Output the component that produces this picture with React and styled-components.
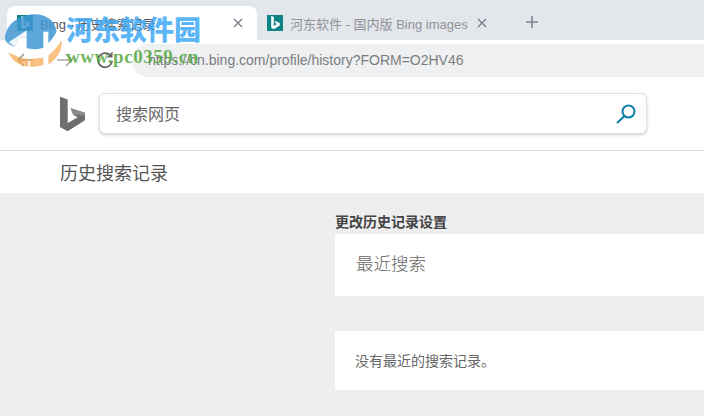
import React from "react";
import styled, { createGlobalStyle } from "styled-components";

const Global = createGlobalStyle`
  html, body { margin: 0; padding: 0; }
  body {
    width: 704px;
    height: 416px;
    overflow: hidden;
    background: #eeeeee;
    font-family: "Liberation Sans", "Noto Sans CJK SC", sans-serif;
  }
`;

const Page = styled.div`
  position: relative;
  width: 704px;
  height: 416px;
  overflow: hidden;
  display: flex;
  flex-direction: column;
`;

const TabStrip = styled.div`
  height: 40px;
  flex: none;
  display: flex;
  align-items: flex-end;
  background: #e3e6ea;
  padding-left: 7px;
`;

const ActiveTab = styled.div`
  width: 250px;
  height: 34px;
  box-sizing: border-box;
  display: flex;
  align-items: center;
  padding: 0 14px 0 10px;
  background: #fff;
  border-radius: 8px 8px 0 0;
`;

const IdleTab = styled.div`
  width: 235px;
  height: 40px;
  box-sizing: border-box;
  display: flex;
  align-items: center;
  padding: 6px 5px 0 10px;
  background: #e3e6ea;
  border-radius: 0 0 0 8px;
`;

const Favicon = styled.div`
  width: 16px;
  height: 16px;
  flex: none;
  background: #0f8487;
  display: flex;
  align-items: center;
  justify-content: center;
`;

const TabTitle = styled.span`
  flex: 1;
  margin-left: 7px;
  font-size: 13px;
  white-space: nowrap;
  color: ${(p) => (p.$dim ? "#909398" : "#55585c")};
`;

const Close = styled.svg`
  width: 10px;
  height: 10px;
  flex: none;
`;

const Plus = styled.svg`
  width: 14px;
  height: 14px;
  margin: 0 0 11px 33px;
  flex: none;
`;

const Toolbar = styled.div`
  height: 40px;
  flex: none;
  display: flex;
  align-items: center;
  background: #fff;
  padding-left: 15px;
`;

const NavIcon = styled.svg`
  width: 20px;
  height: 20px;
  flex: none;
  margin-right: ${(p) => p.$gap}px;
`;

const Address = styled.div`
  flex: 1;
  height: 33px;
  margin-left: 17px;
  display: flex;
  align-items: center;
  padding-left: 16px;
  background: #eef0f2;
  border-radius: 17px 0 0 17px;
  color: #7b7d80;
  font-size: 14px;
`;

const SearchHeader = styled.div`
  height: 71px;
  flex: none;
  box-sizing: border-box;
  display: flex;
  align-items: flex-start;
  padding: 13px 0 0 60px;
  background: #fff;
  border-bottom: 1px solid #dddddd;
`;

const BingMark = styled.svg`
  width: 25px;
  height: 36px;
  flex: none;
  margin-top: 3px;
`;

const SearchBox = styled.div`
  width: 548px;
  height: 41px;
  box-sizing: border-box;
  margin-left: 14px;
  display: flex;
  align-items: center;
  justify-content: space-between;
  padding: 0 9px 0 16px;
  background: #fff;
  border: 1px solid #e2e2e2;
  border-radius: 6px;
  box-shadow: 0 1px 3px rgba(0, 0, 0, 0.2);
  font-size: 16px;
  color: #666666;
`;

const SearchLabel = styled.span`
  margin-top: -2px;
`;

const SearchIcon = styled.svg`
  width: 22px;
  height: 22px;
`;

const SubHeader = styled.div`
  height: 42px;
  flex: none;
  display: flex;
  align-items: center;
  padding-left: 60px;
  background: #fff;
  font-size: 18px;
  color: #555555;
`;

const Content = styled.div`
  flex: 1;
  display: flex;
  flex-direction: column;
  padding: 21px 0 0 335px;
`;

const SettingsLink = styled.div`
  height: 20px;
  line-height: 16px;
  font-size: 14px;
  font-weight: bold;
  color: #444444;
`;

const Card = styled.div`
  display: flex;
  align-items: center;
  height: ${(p) => p.$h}px;
  margin-bottom: ${(p) => p.$mb || 0}px;
  padding-left: ${(p) => p.$pl}px;
  background: #fff;
`;

const CardTitle = styled.h2`
  margin: 0 0 5px;
  font-family: "Noto Sans CJK SC", sans-serif;
  font-size: 17.5px;
  font-weight: 300;
  color: #666666;
`;

const EmptyNote = styled.div`
  margin-bottom: 2px;
  font-size: 14px;
  color: #666666;
`;

const WatermarkLogo = styled.svg`
  position: absolute;
  left: 0;
  top: 5px;
  width: 90px;
  height: 70px;
  pointer-events: none;
`;

const WatermarkName = styled.div`
  position: absolute;
  left: 66px;
  top: 12px;
  font-family: "Noto Sans CJK SC", sans-serif;
  font-size: 27px;
  line-height: 34px;
  font-weight: 900;
  white-space: nowrap;
  color: rgba(62, 168, 245, 0.85);
  pointer-events: none;
`;

const WatermarkUrl = styled.div`
  position: absolute;
  left: 66px;
  top: 46px;
  font-family: "Liberation Serif", serif;
  font-size: 19px;
  line-height: 22px;
  font-weight: bold;
  letter-spacing: 0.55px;
  white-space: nowrap;
  color: rgba(86, 168, 62, 0.85);
  pointer-events: none;
`;

const BingGlyph = () => (
  <svg width="11" height="14" viewBox="0 0 10 13">
    <path d="M1 0l2.4.8v8.4l3-1.8-1.4-.7-.9-2.2L9 6.4v2.5L3.4 12.4 1 11z" fill="#fff" />
  </svg>
);

const CloseIcon = () => (
  <Close viewBox="0 0 10 10">
    <path d="M1 1l8 8M9 1l-8 8" stroke="#6f7a86" strokeWidth="1.2" />
  </Close>
);

export default function App() {
  return (
    <Page>
      <Global />
      <TabStrip>
        <ActiveTab>
          <Favicon><BingGlyph /></Favicon>
          <TabTitle>Bing - 历史搜索记录</TabTitle>
          <CloseIcon />
        </ActiveTab>
        <IdleTab>
          <Favicon><BingGlyph /></Favicon>
          <TabTitle $dim>河东软件 - 国内版 Bing images</TabTitle>
          <CloseIcon />
        </IdleTab>
        <Plus viewBox="0 0 14 14">
          <path d="M7 1v12M1 7h12" stroke="#7c8894" strokeWidth="1.6" />
        </Plus>
      </TabStrip>
      <Toolbar>
        <NavIcon $gap={20} viewBox="0 0 20 20">
          <path d="M18 10H3M9 4l-6 6 6 6" fill="none" stroke="#999" strokeWidth="1.6" />
        </NavIcon>
        <NavIcon $gap={20} viewBox="0 0 20 20">
          <path d="M2 10h15M11 4l6 6-6 6" fill="none" stroke="#a9a9a9" strokeWidth="1.6" />
        </NavIcon>
        <NavIcon $gap={0} viewBox="0 0 20 20">
          <path d="M16 6.5A7 7 0 1 0 17 11" fill="none" stroke="#666" strokeWidth="1.8" />
          <path d="M17.5 1.5v6h-6z" fill="#666" />
        </NavIcon>
        <Address>https://cn.bing.com/profile/history?FORM=O2HV46</Address>
      </Toolbar>
      <SearchHeader>
        <BingMark viewBox="0 0 26 36">
          <path d="M0 0l8 2.8v24.6l10.5-6-4.6-2.3-2.9-7L26 16.6v8L8 36 0 31.5z" fill="#6e6e6e" />
          <path d="M11 12.1l15 4.5v3L13.9 19.1z" fill="#8b8b8b" />
        </BingMark>
        <SearchBox>
          <SearchLabel>搜索网页</SearchLabel>
          <SearchIcon viewBox="0 0 22 22">
            <circle cx="13.5" cy="8.5" r="6" fill="none" stroke="#0c7ea8" strokeWidth="2" />
            <path d="M9.5 13L2 20" stroke="#0c7ea8" strokeWidth="2" />
          </SearchIcon>
        </SearchBox>
      </SearchHeader>
      <SubHeader>历史搜索记录</SubHeader>
      <Content>
        <SettingsLink>更改历史记录设置</SettingsLink>
        <Card $h={62} $mb={35} $pl={21}>
          <CardTitle>最近搜索</CardTitle>
        </Card>
        <Card $h={59} $pl={20}>
          <EmptyNote>没有最近的搜索记录。</EmptyNote>
        </Card>
      </Content>
      <WatermarkLogo viewBox="0 0 270 210">
        <path
          d="M15 100C18 55 60 28 105 28C140 28 165 48 170 80C162 95 152 108 145 115V80H130V128C105 135 95 132 80 130V98H55L45 125C28 120 15 112 15 100Z"
          fill="#3f97d3"
          fillOpacity="0.85"
        />
        <path d="M26 112L80 76V98H55L45 125z" fill="#fff" fillOpacity="0.9" />
        <path
          d="M25 142C40 150 60 160 85 162V185C55 183 35 165 25 142ZM90 162L130 158V180C115 185 100 186 90 185ZM145 152C160 140 175 122 185 105C188 135 170 165 145 178Z"
          fill="#f8a64e"
          fillOpacity="0.7"
        />
      </WatermarkLogo>
      <WatermarkName>河东软件园</WatermarkName>
      <WatermarkUrl>www.pc0359.cn</WatermarkUrl>
    </Page>
  );
}
